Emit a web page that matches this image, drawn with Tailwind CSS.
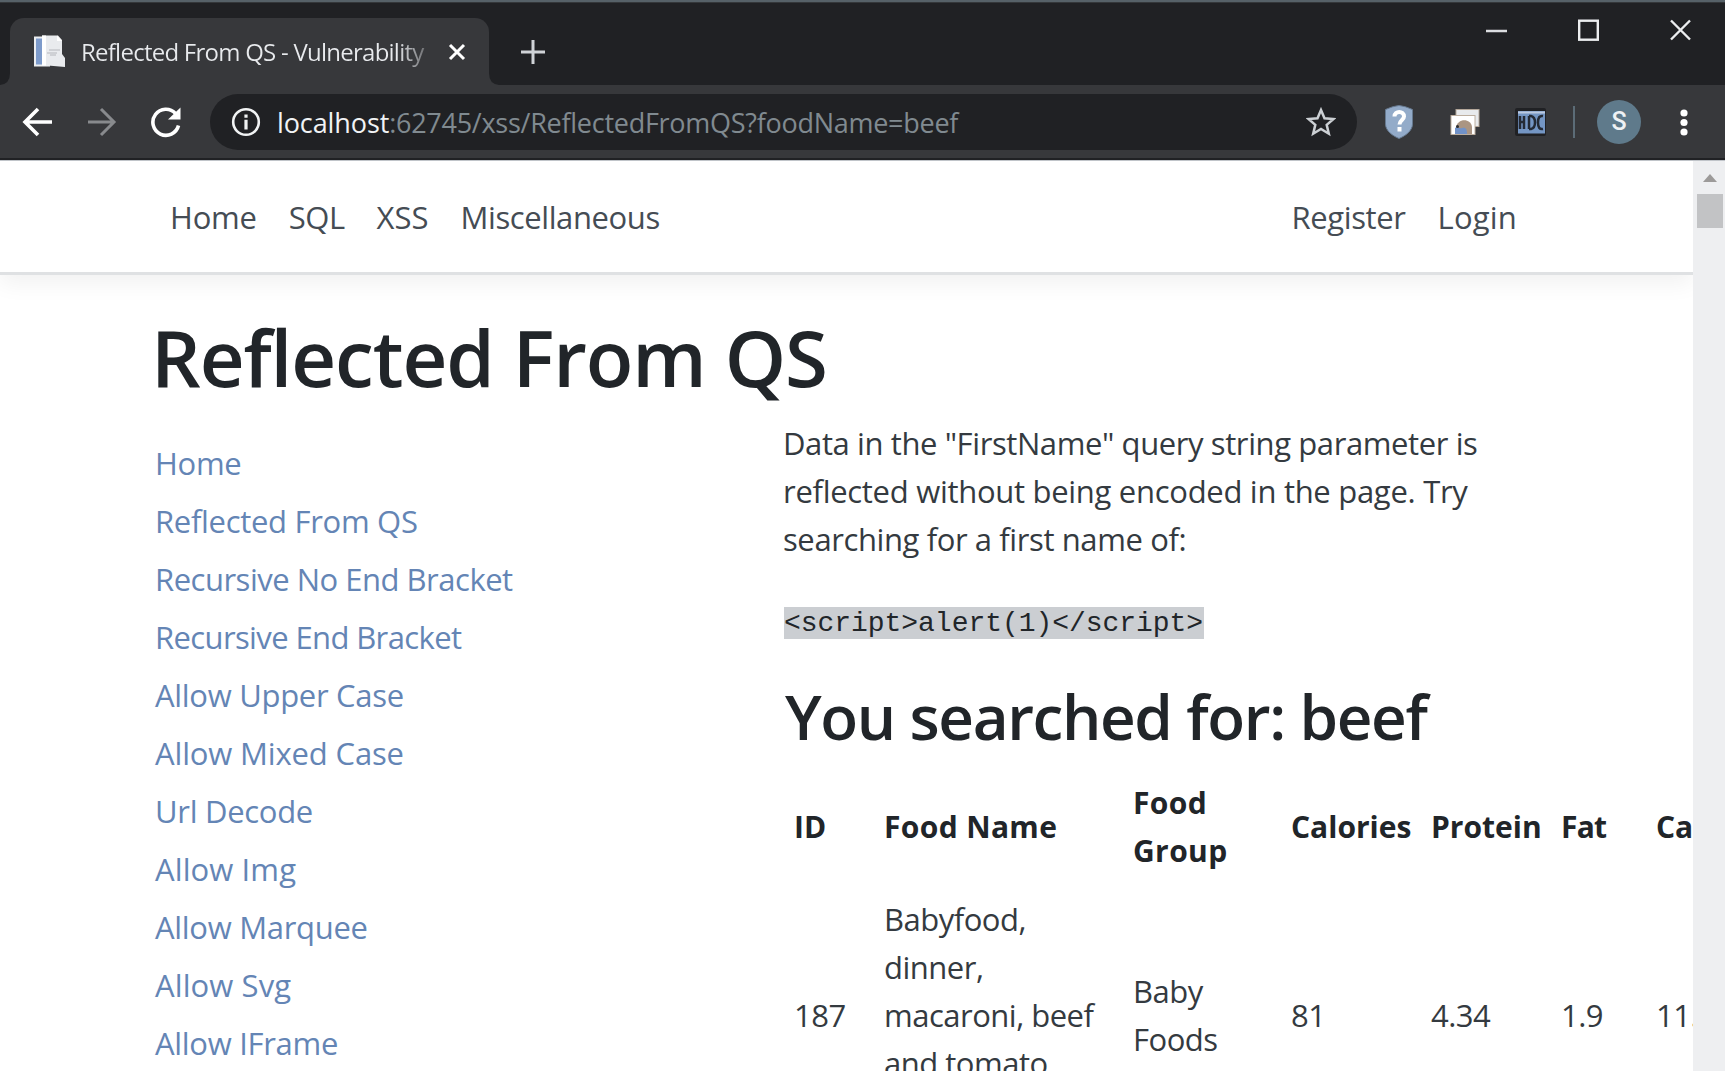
<!DOCTYPE html>
<html lang="en">
<head>
<meta charset="utf-8">
<title>Reflected From QS - Vulnerability</title>
<script src="https://cdn.jsdelivr.net/npm/@tailwindcss/browser@4"></script>
</head>
<body class="flex h-screen w-screen flex-col overflow-hidden bg-white font-['Open_Sans',sans-serif] text-[#212529]">

<!-- Browser window chrome -->
<header class="h-[161px] shrink-0 border-t-2 border-[#566168] bg-[#202124]">
  <div class="flex h-[83px] border-t border-[#34373a]">
    <div class="flex flex-1 items-end">
      <svg class="h-[12px] w-[10px]" viewBox="0 0 10 12"><path d="M0 12 Q10 11 10 0 V12Z" fill="#37383b"/></svg>
      <div class="flex h-[67px] w-[479px] items-center rounded-t-[14px] bg-[#37383b] pl-[23px]">
        <svg class="-mt-px h-[34px] w-[34px] shrink-0" viewBox="0 0 34 34">
          <rect x="2" y="3.500" width="14" height="28" fill="#7d9bcb" stroke="#eceef1" stroke-width="2"/>
          <path d="M9 1.500 H25 L29 6 V20 L32 24 V33 L9 31Z" fill="#e9ebee"/>
          <path d="M9 1.500 H13 V31.500 H9Z M24 1.500 V7 H29Z" fill="#fff"/>
          <path d="M16 16h11M14 19h10M17 21h6" stroke="#c6c9cd" stroke-width="1.500"/>
        </svg>
        <div class="ml-[14px] w-[359px] overflow-hidden whitespace-nowrap bg-linear-to-r from-[#e8eaed] from-88% to-[#37383b] to-100% bg-clip-text text-[24px] leading-[34px] font-medium tracking-[-0.75px] text-transparent">Reflected From QS - Vulnerability</div>
        <svg class="ml-[8px] h-[18px] w-[18px] shrink-0" viewBox="0 0 18 18"><path d="M2 2 L16 16 M16 2 L2 16" stroke="#fff" stroke-width="3"/></svg>
      </div>
      <svg class="h-[12px] w-[10px]" viewBox="0 0 10 12"><path d="M10 12 Q0 11 0 0 V12Z" fill="#37383b"/></svg>
      <svg class="mb-[21px] ml-[22px] h-[24px] w-[24px]" viewBox="0 0 24 24"><path d="M12 0V24M0 12H24" stroke="#d0d3d7" stroke-width="3"/></svg>
    </div>
    <div class="flex items-start gap-[71px] pt-[16px] pr-[34px]">
      <svg class="h-[22px] w-[21px]" viewBox="0 0 21 22"><path d="M0 12H21" stroke="#dcdee1" stroke-width="2.500"/></svg>
      <svg class="h-[22px] w-[21px]" viewBox="0 0 21 22"><rect x="1.200" y="1.700" width="18.600" height="19" fill="none" stroke="#eceef0" stroke-width="2.400"/></svg>
      <svg class="h-[22px] w-[21px]" viewBox="0 0 21 22"><path d="M1 1.500L20 20.500M20 1.500L1 20.500" stroke="#eceef0" stroke-width="2.400"/></svg>
    </div>
  </div>

  <div class="flex h-[73px] items-center bg-[#37383b] pt-px pl-[22px]">
    <svg class="h-[30px] w-[31px]" viewBox="0 0 31 30"><path d="M30 15H3M16 2L3 15L16 28" fill="none" stroke="#fff" stroke-width="3.600"/></svg>
    <svg class="ml-[34px] h-[30px] w-[31px]" viewBox="0 0 31 30"><path d="M1 15H27M14 2L27 15L14 28" fill="none" stroke="#888a8d" stroke-width="3"/></svg>
    <svg class="ml-[32px] h-[32px] w-[32px]" viewBox="0 0 32 32"><path d="M28.500 19.500A13 13 0 1 1 25.500 7.500" fill="none" stroke="#fff" stroke-width="3.600"/><path d="M30.500 1.500V13.500H18Z" fill="#fff"/></svg>
    <div class="ml-[28px] flex h-[56px] w-[1147px] items-center rounded-full bg-[#202124] pl-[21px]">
      <svg class="h-[30px] w-[30px]" viewBox="0 0 30 30"><circle cx="15" cy="15" r="12.800" fill="none" stroke="#f1f3f4" stroke-width="2.600"/><path d="M15 7.500V10.700M15 12.700V22.500" stroke="#f1f3f4" stroke-width="3.200"/></svg>
      <div class="ml-[16px] flex-1 pt-px text-[27px] leading-[40px] tracking-[-0.27px] whitespace-nowrap text-[#808a90]"><span class="tracking-[-0.1px] text-[#f1f3f5]">localhost</span>:62745/xss/ReflectedFromQS?foodName=beef</div>
      <svg class="mr-[21px] h-[30px] w-[30px]" viewBox="0 0 30 30"><path d="M15 3L18.500 11.300L27.500 12L20.700 17.900L22.800 26.700L15 22L7.200 26.700L9.300 17.900L2.500 12L11.500 11.300Z" fill="none" stroke="#ccd0d4" stroke-width="2.500"/></svg>
    </div>
    <svg class="ml-[27px] h-[34px] w-[30px]" viewBox="0 0 30 34"><path d="M15 .5Q21 1 28.500 4.500V19C28.500 26 21 31 15 33.500C9 31 1.500 26 1.500 19V4.500Q9 1 15 .5Z" fill="#93abc9" stroke="#66798f"/><path d="M10.500 11.500C10.500 5.500 20 5.500 20 11.500C20 15 15.500 15 15.500 19.500M15.500 22V26.500" fill="none" stroke="#fff" stroke-width="4"/></svg>
    <svg class="ml-[35px] h-[28px] w-[32px]" viewBox="0 0 32 28"><rect x="7" y="1.500" width="23" height="17" fill="#e8eaec" stroke="#b4a79a"/><rect x="2" y="7.500" width="24" height="19" fill="#fff" stroke="#bcae9f"/><path d="M7 26V20C8 10 22 10 23 19V26Z" fill="#aa9583"/><path d="M6 26V20C8 18 10 21 13 20C17 19 18 21 18 26Z" fill="#7192c8"/><circle cx="8.500" cy="18.500" r="1.500" fill="#292c30"/></svg>
    <svg class="ml-[34px] h-[28px] w-[31px]" viewBox="0 0 31 28"><rect width="31" height="28" rx="2" fill="#202124"/><rect x="3" y="3" width="27" height="22.500" fill="#7496c4"/><path d="M3 4.500H30" stroke="#bac9e1" stroke-width="2"/><path d="M5 8V21M5 14H9M9 8V21M14 8V21M14 8H16Q20 9 20 14.500T16 21H14M28 8Q23 7 23 14.500T28 21" fill="none" stroke="#242a35" stroke-width="2.500"/></svg>
    <div class="ml-[27px] h-[32px] w-[2px] bg-[#5c6c77]"></div>
    <div class="ml-[22px] flex h-[44px] w-[44px] items-center justify-center rounded-full bg-[#5f7a8b] font-['Roboto',sans-serif] text-[25px] font-medium text-[#eef1f4]">S</div>
    <svg class="ml-[39px] h-[28px] w-[8px]" viewBox="0 0 8 28"><circle cx="4" cy="5" r="3.600" fill="#fff"/><circle cx="4" cy="14.500" r="3.600" fill="#fff"/><circle cx="4" cy="24" r="3.600" fill="#fff"/></svg>
  </div>
  <div class="h-[3px] border-b border-[#c0c4c9] bg-[#202124]"></div>
</header>

<div class="flex min-h-0 flex-1">
  <!-- Page viewport -->
  <div class="min-w-0 flex-1 overflow-hidden">
    <nav class="flex h-[114px] items-start justify-between border-b-3 border-[#dfe1e3] pt-[32px] pr-[176px] pl-[170px] text-[31px] leading-[48px] tracking-[-0.4px] text-[#454c54] shadow-[0_8px_22px_rgba(0,0,0,0.06)]">
      <div class="flex gap-8"><a class="tracking-[-0.2px]">Home</a><a class="tracking-[-0.5px]">SQL</a><a class="tracking-[0px]">XSS</a><a>Miscellaneous</a></div>
      <div class="flex gap-8"><a>Register</a><a class="tracking-[0.2px]">Login</a></div>
    </nav>

    <main class="pt-[34px]">
      <h1 class="ml-[151px] text-[78px] leading-[96px] font-semibold tracking-[-1.12px] whitespace-nowrap">Reflected From QS</h1>
      <div class="flex">
        <ul class="ml-[155px] flex w-[628px] shrink-0 flex-col gap-[10px] pt-[34px] text-[31px] leading-[48px] tracking-[-0.3px] text-[#6485b5]">
          <li class="tracking-[-0.3px]">Home</li>
          <li>Reflected From QS</li>
          <li class="tracking-[-0.49px]">Recursive No End Bracket</li>
          <li class="tracking-[-0.62px]">Recursive End Bracket</li>
          <li>Allow Upper Case</li>
          <li class="tracking-[-0.15px]">Allow Mixed Case</li>
          <li>Url Decode</li>
          <li class="tracking-[0.1px]">Allow Img</li>
          <li>Allow Marquee</li>
          <li class="tracking-[0.1px]">Allow Svg</li>
          <li>Allow IFrame</li>
        </ul>
        <section class="shrink-0 pt-[14px]">
          <p class="text-[31px] leading-[48px] tracking-[-0.4px] text-[#343a40]">Data in the "FirstName" query string parameter is<br><span class="tracking-[-0.29px]">reflected without being encoded in the page. Try</span><br>searching for a first name of:</p>
          <code class="mt-[44px] ml-px block h-[32px] w-[420px] bg-[#cbced2] font-['Liberation_Mono',monospace] text-[28px] leading-[33px] tracking-[-0.04px] whitespace-nowrap">&lt;script&gt;alert(1)&lt;/script&gt;</code>
          <h2 class="mt-[39px] ml-[2px] text-[62px] leading-[76px] font-semibold tracking-[-1.38px] whitespace-nowrap">You searched for: beef</h2>
          <table class="mt-[15px] ml-px w-[1010px] table-fixed text-left text-[31px] leading-[48px] tracking-[-0.5px] text-[#343a40]">
            <colgroup><col class="w-[90px]"><col class="w-[249px]"><col class="w-[158px]"><col class="w-[140px]"><col class="w-[130px]"><col class="w-[95px]"><col class="w-[148px]"></colgroup>
            <thead class="text-[30px] tracking-[0px] text-[#212529]">
              <tr class="[&>th]:p-[10px] [&>th]:pr-0">
                <th>ID</th><th class="tracking-[0.35px]">Food Name</th><th class="tracking-[0.4px]">Food<br>Group</th><th>Calories</th><th>Protein</th><th class="tracking-[-0.8px]">Fat</th><th>Carbs</th>
              </tr>
            </thead>
            <tbody>
              <tr class="[&>td]:p-[10px] [&>td]:pr-0">
                <td>187</td><td>Babyfood,<br>dinner,<br>macaroni, beef<br>and tomato<br>sauce, toddler</td><td>Baby<br>Foods</td><td>81</td><td>4.34</td><td>1.9</td><td>11.24</td>
              </tr>
            </tbody>
          </table>
        </section>
      </div>
    </main>
  </div>

  <!-- Scrollbar -->
  <div class="flex w-[32px] shrink-0 flex-col items-center bg-[#eeeff1] pt-[13px] pl-[2px]">
    <svg class="h-[8px] w-[14px]" viewBox="0 0 14 8"><path d="M0 8L7 0L14 8Z" fill="#9c9a99"/></svg>
    <div class="mt-[12px] h-[34px] w-[26px] bg-[#c2c3c5]"></div>
  </div>
</div>
</body>
</html>
